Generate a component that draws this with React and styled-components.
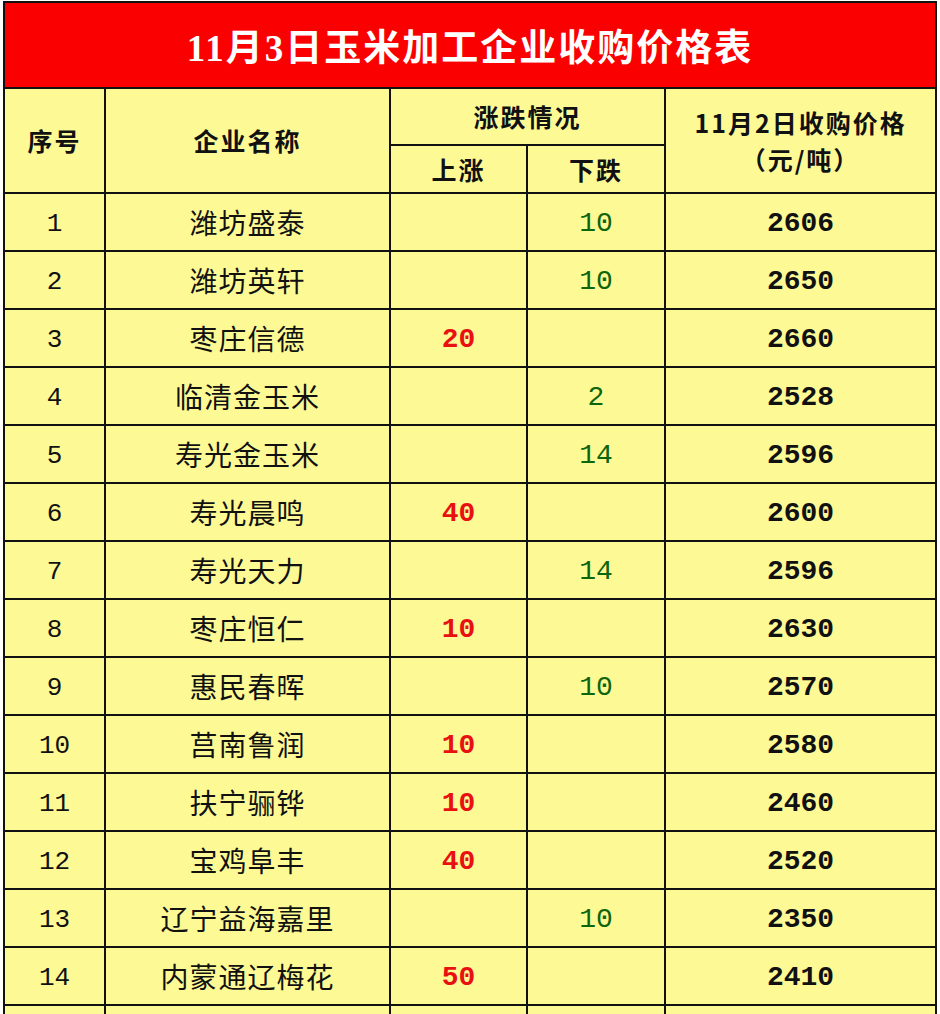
import React from 'react';
import styled, { createGlobalStyle } from 'styled-components';

const GlobalStyle = createGlobalStyle`
  html, body {
    margin: 0;
    padding: 0;
    background: #ffffff;
  }
  body {
    font-family: "Noto Sans CJK SC", sans-serif;
  }
`;

const Page = styled.div`
  padding: 1px 0 0 3px;
`;

const Sheet = styled.table`
  border-collapse: collapse;
  table-layout: fixed;
  width: 932px;
  background: #fdfa96;
`;

const TitleCell = styled.th`
  height: 84px;
  padding: 0;
  border: 2px solid #111;
  background: #fb0000;
  color: #ffffff;
  font-family: "Liberation Serif", "Noto Sans CJK SC", serif;
  font-size: 37px;
  font-weight: 700;
  letter-spacing: 2px;
  text-align: center;
  vertical-align: middle;
`;

const HeadCell = styled.th`
  height: ${(p) => p.$h}px;
  padding: 0;
  border: 2px solid #111;
  color: #111;
  font-family: "Noto Sans CJK SC", sans-serif;
  font-size: 25px;
  font-weight: 700;
  line-height: 37px;
  letter-spacing: 2px;
  text-align: center;
  vertical-align: middle;
`;

const Cell = styled.td`
  box-sizing: border-box;
  height: 56px;
  padding: ${(p) => (p.$kind === 'name' ? '0' : '3px 0 0')};
  border: 2px solid #111;
  text-align: center;
  vertical-align: middle;
  color: ${(p) => (p.$kind === 'up' ? '#e81010' : p.$kind === 'down' ? '#0d650d' : '#111')};
  font-family: ${(p) =>
    p.$kind === 'name' ? '"Noto Sans CJK SC", sans-serif' : '"Liberation Mono", monospace'};
  font-size: ${(p) => (p.$kind === 'seq' ? '26px' : '28px')};
  letter-spacing: ${(p) => (p.$kind === 'name' ? '1px' : '0')};
  line-height: 1;
  font-weight: ${(p) => (p.$kind === 'up' || p.$kind === 'price' ? 700 : 400)};
`;

const Row = styled.tr`
  height: 58px;
`;

const rows = [
  [1, '潍坊盛泰', '', '10', 2606],
  [2, '潍坊英轩', '', '10', 2650],
  [3, '枣庄信德', '20', '', 2660],
  [4, '临清金玉米', '', '2', 2528],
  [5, '寿光金玉米', '', '14', 2596],
  [6, '寿光晨鸣', '40', '', 2600],
  [7, '寿光天力', '', '14', 2596],
  [8, '枣庄恒仁', '10', '', 2630],
  [9, '惠民春晖', '', '10', 2570],
  [10, '莒南鲁润', '10', '', 2580],
  [11, '扶宁骊铧', '10', '', 2460],
  [12, '宝鸡阜丰', '40', '', 2520],
  [13, '辽宁益海嘉里', '', '10', 2350],
  [14, '内蒙通辽梅花', '50', '', 2410],
];

export default function App() {
  return (
    <Page>
      <GlobalStyle />
      <Sheet>
        <colgroup>
          <col style={{ width: 101 }} />
          <col style={{ width: 285 }} />
          <col style={{ width: 137 }} />
          <col style={{ width: 138 }} />
          <col style={{ width: 271 }} />
        </colgroup>
        <thead>
          <tr>
            <TitleCell colSpan={5}>11月3日玉米加工企业收购价格表</TitleCell>
          </tr>
          <tr>
            <HeadCell rowSpan={2} $h={55}>序号</HeadCell>
            <HeadCell rowSpan={2} $h={55}>企业名称</HeadCell>
            <HeadCell colSpan={2} $h={55}>涨跌情况</HeadCell>
            <HeadCell rowSpan={2} $h={55}>
              11月2日收购价格
              <br />
              （元/吨）
            </HeadCell>
          </tr>
          <tr>
            <HeadCell $h={46}>上涨</HeadCell>
            <HeadCell $h={46}>下跌</HeadCell>
          </tr>
        </thead>
        <tbody>
          {rows.map(([seq, name, up, down, price]) => (
            <Row key={seq}>
              <Cell $kind="seq">{seq}</Cell>
              <Cell $kind="name">{name}</Cell>
              <Cell $kind="up">{up}</Cell>
              <Cell $kind="down">{down}</Cell>
              <Cell $kind="price">{price}</Cell>
            </Row>
          ))}
          <Row>
            <Cell $kind="seq" />
            <Cell $kind="name" />
            <Cell $kind="up" />
            <Cell $kind="down" />
            <Cell $kind="price" />
          </Row>
        </tbody>
      </Sheet>
    </Page>
  );
}
